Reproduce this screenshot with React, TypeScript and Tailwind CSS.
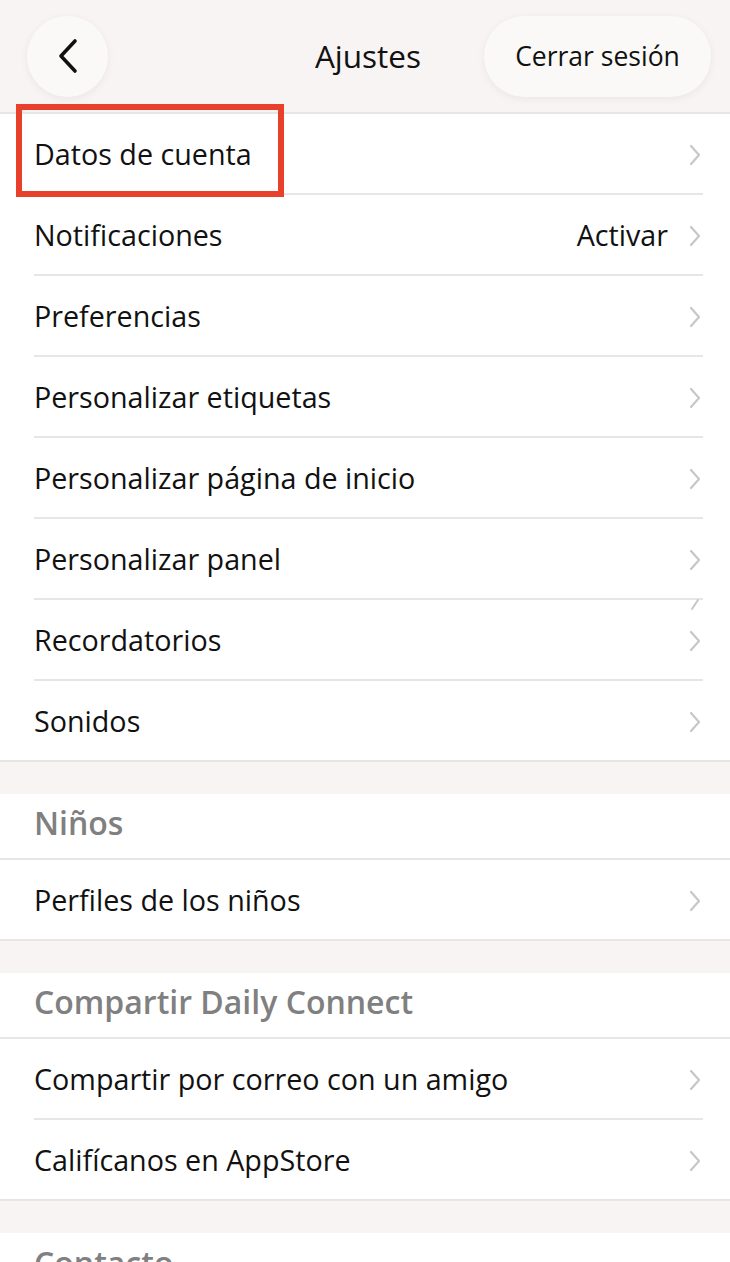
import React from "react";

const Chevron = () => (
  <svg width="14" height="24" viewBox="0 0 14 24" className="shrink-0">
    <path d="M3 3 L11 12 L3 21" fill="none" stroke="#c7c7c7" strokeWidth="2.2" strokeLinecap="round" strokeLinejoin="round" />
  </svg>
);

const Row = ({ label, value, inset = true, last = false }: { label: string; value?: string; inset?: boolean; last?: boolean }) => (
  <div className="relative h-[81px] bg-white flex items-center pl-[34px] pr-[28px]">
    <span className="flex-1 text-[28.7px] text-[#111] leading-none">{label}</span>
    {value && <span className="text-[28.7px] text-[#111] mr-[20px] leading-none">{value}</span>}
    <Chevron />
    {!last && (
      <div className={`absolute bottom-0 h-[2px] bg-[#e8e6e5] ${inset ? "left-[34px] right-[27px]" : "left-0 right-0"}`} />
    )}
    {last && <div className="absolute bottom-0 left-0 right-0 h-[2px] bg-[#e8e6e5]" />}
  </div>
);

const SectionHeader = ({ label, border = true }: { label: string; border?: boolean }) => (
  <div className={`h-[66px] bg-white flex items-center pl-[34px] pb-[6px] ${border ? "border-b-2 border-[#e8e6e5]" : ""}`}>
    <span className="text-[32px] font-semibold text-[#808080] leading-none">{label}</span>
  </div>
);

const Gap = () => <div className="h-[32px] bg-[#f8f4f3]" />;

export default function App() {
  return (
    <div className="w-[730px] h-[1262px] overflow-hidden bg-white" style={{ fontFamily: "'Open Sans', 'Noto Sans', sans-serif" }}>
      <div className="h-[114px] bg-[#f7f4f3] border-b-2 border-[#e8e6e5] flex items-center justify-between px-[27px] relative">
        <div className="w-[81px] h-[81px] rounded-full bg-[#fbf9f8] shadow-[0_2px_8px_rgba(0,0,0,0.06)] flex items-center justify-center">
          <svg width="24" height="36" viewBox="0 0 24 36">
            <path d="M19 3 L5 18 L19 33" fill="none" stroke="#111" strokeWidth="3.6" strokeLinecap="round" strokeLinejoin="round" />
          </svg>
        </div>
        <div className="absolute left-0 right-0 flex justify-center pointer-events-none">
          <span className="text-[31.5px] text-[#111] ml-[6px] leading-none">Ajustes</span>
        </div>
        <div className="h-[81px] w-[227px] mr-[-8px] rounded-full bg-[#fbf9f8] shadow-[0_2px_8px_rgba(0,0,0,0.06)] flex items-center justify-center">
          <span className="text-[26.5px] text-[#111] leading-none">Cerrar sesión</span>
        </div>
      </div>

      <div className="relative">
        <div className="absolute left-[16px] top-[-10px] w-[268px] h-[93px] border-[6px] border-[#e8402a] z-10 pointer-events-none" />
        <Row label="Datos de cuenta" />
        <Row label="Notificaciones" value="Activar" />
        <Row label="Preferencias" />
        <Row label="Personalizar etiquetas" />
        <Row label="Personalizar página de inicio" />
        <Row label="Personalizar panel" />
        <div className="relative">
          <svg className="absolute right-[30px] top-[-2px] z-10" width="10" height="14" viewBox="0 0 10 14">
            <path d="M8 2 L2 11" stroke="#c7c7c7" strokeWidth="2" strokeLinecap="round" />
          </svg>
          <Row label="Recordatorios" />
        </div>
        <Row label="Sonidos" last />
      </div>

      <Gap />
      <SectionHeader label="Niños" />
      <Row label="Perfiles de los niños" last />
      <Gap />
      <SectionHeader label="Compartir Daily Connect" />
      <Row label="Compartir por correo con un amigo" />
      <Row label="Califícanos en AppStore" last />
      <Gap />
      <SectionHeader label="Contacto" border={false} />
    </div>
  );
}
